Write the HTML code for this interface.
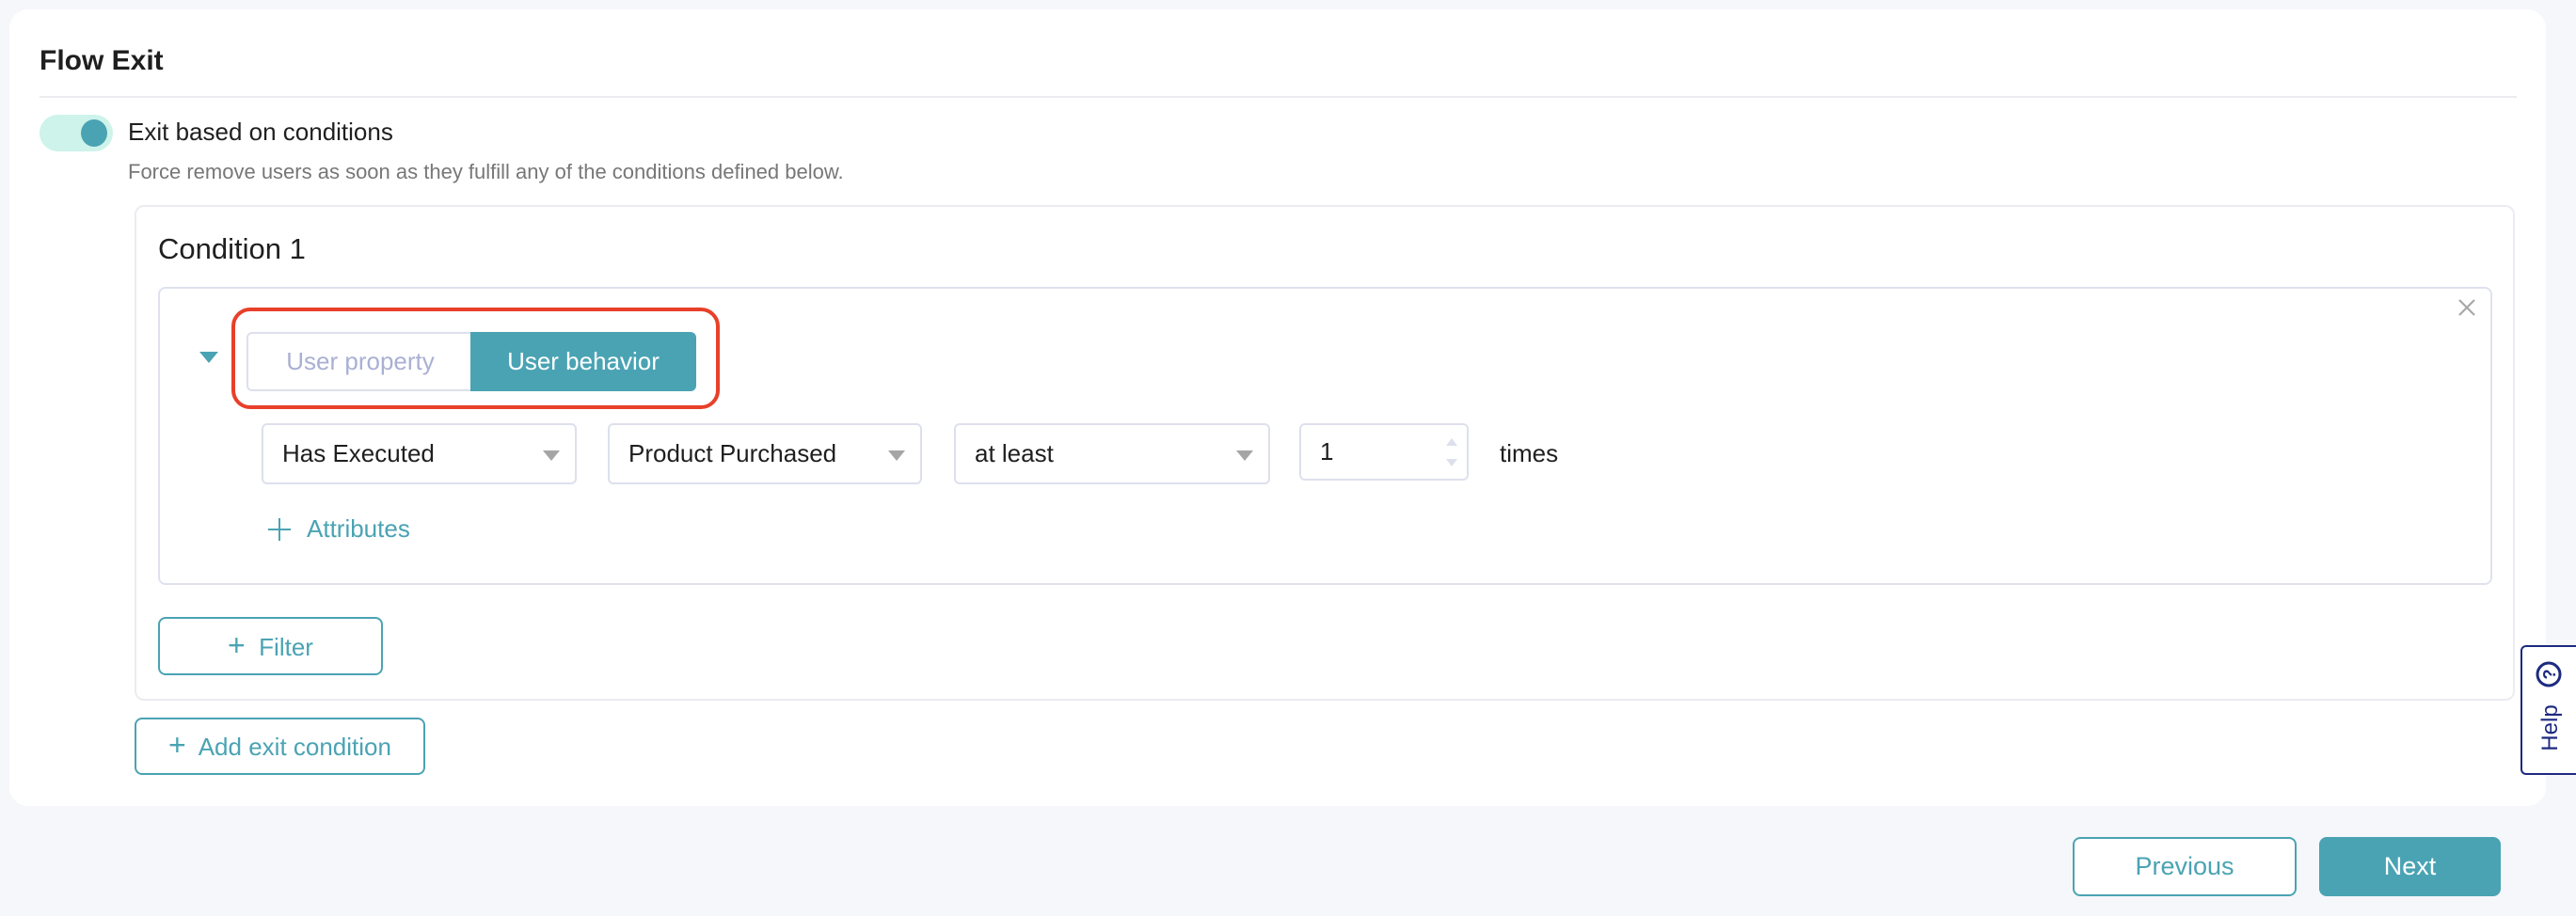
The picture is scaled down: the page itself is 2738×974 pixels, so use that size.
<!DOCTYPE html>
<html><head><style>
*{box-sizing:border-box;margin:0;padding:0}
body{width:2738px;height:974px;background:#f6f7fb;font-family:"Liberation Sans",sans-serif;position:relative;overflow:hidden;color:#1f1f1f}
.abs{position:absolute}
.card{left:10px;top:10px;width:2696px;height:847px;background:#fff;border-radius:20px}
.sel{top:450px;height:65px;border:2px solid #dde0ec;border-radius:6px;font-size:26px;line-height:61px;padding-left:20px;background:#fff}
.sel .ar{position:absolute;right:16px;top:27px;width:0;height:0;border-left:9px solid transparent;border-right:9px solid transparent;border-top:11px solid #a5a5a5}
.btn{border:2.5px solid #4aa3b3;border-radius:8px;color:#4aa3b3;font-size:26px;text-align:center;background:#fff}
</style></head><body>
<div class="abs card"></div>
<div class="abs" style="left:42px;top:48px;font-size:30px;font-weight:bold;color:#1f1f1f">Flow Exit</div>
<div class="abs" style="left:42px;top:102px;width:2633px;height:2px;background:#ececf1"></div>
<div class="abs" style="left:42px;top:122px;width:78px;height:39px;border-radius:20px;background:#cdf3ea"></div>
<div class="abs" style="left:86px;top:127px;width:28px;height:29px;border-radius:50%;background:#4aa3b3"></div>
<div class="abs" style="left:136px;top:125px;font-size:26px;color:#1f1f1f">Exit based on conditions</div>
<div class="abs" style="left:136px;top:170px;font-size:22px;color:#777">Force remove users as soon as they fulfill any of the conditions defined below.</div>
<div class="abs" style="left:143px;top:218px;width:2530px;height:527px;border:2px solid #ebecf1;border-radius:10px"></div>
<div class="abs" style="left:168px;top:247px;font-size:31px;color:#1f1f1f">Condition 1</div>
<div class="abs" style="left:168px;top:305px;width:2481px;height:317px;border:2px solid #dfe2ee;border-radius:8px"></div>
<svg class="abs" style="left:2612px;top:317px" width="20" height="20"><path d="M2 2L18 18M18 2L2 18" stroke="#a8a8a8" stroke-width="2.2"/></svg>
<div class="abs" style="left:212px;top:374px;width:0;height:0;border-left:10px solid transparent;border-right:10px solid transparent;border-top:12px solid #4aa3b3"></div>
<div class="abs" style="left:246px;top:327px;width:519px;height:108px;border:4px solid #e8402a;border-radius:20px"></div>
<div class="abs" style="left:262px;top:353px;width:240px;height:63px;border:2px solid #dde0ec;border-right:none;border-radius:6px 0 0 6px;color:#a9b0d3;font-size:26px;text-align:center;line-height:59px">User property</div>
<div class="abs" style="left:500px;top:353px;width:240px;height:63px;background:#4aa3b3;border-radius:0 6px 6px 0;color:#fff;font-size:26px;text-align:center;line-height:63px">User behavior</div>
<div class="abs sel" style="left:278px;width:335px">Has Executed<span class="ar"></span></div>
<div class="abs sel" style="left:646px;width:334px">Product Purchased<span class="ar"></span></div>
<div class="abs sel" style="left:1014px;width:336px">at least<span class="ar"></span></div>
<div class="abs sel" style="left:1381px;width:180px;height:61px;line-height:57px">1
<span class="abs" style="right:10px;top:14px;width:0;height:0;border-left:6px solid transparent;border-right:6px solid transparent;border-bottom:8px solid #dde0ec"></span>
<span class="abs" style="right:10px;top:36px;width:0;height:0;border-left:6px solid transparent;border-right:6px solid transparent;border-top:8px solid #dde0ec"></span></div>
<div class="abs" style="left:1594px;top:467px;font-size:26px">times</div>
<svg class="abs" style="left:284px;top:550px" width="26" height="26"><path d="M13 1V25M1 13H25" stroke="#4aa3b3" stroke-width="2"/></svg>
<div class="abs" style="left:326px;top:547px;font-size:26px;color:#4aa3b3">Attributes</div>
<div class="abs btn" style="left:168px;top:656px;width:239px;height:62px;line-height:56px"><span style="font-size:32px">+</span>&nbsp; Filter</div>
<div class="abs btn" style="left:143px;top:763px;width:309px;height:61px;line-height:55px"><span style="font-size:32px">+</span>&nbsp; Add exit condition</div>
<div class="abs" style="left:2679px;top:686px;width:62px;height:138px;border:2px solid #1c2a80;border-right:none;border-radius:6px 0 0 6px;background:#fff"></div>
<div class="abs" style="left:2676px;top:760px;width:70px;transform:rotate(-90deg);font-size:24px;color:#1c2a80;text-align:center">Help</div>
<svg class="abs" style="left:2694px;top:702px" width="30" height="30"><circle cx="15" cy="15" r="12" fill="none" stroke="#1c2a80" stroke-width="3"/><text x="15" y="22" transform="rotate(-90 15 15)" font-size="18" font-weight="bold" text-anchor="middle" fill="#1c2a80" font-family="Liberation Sans">?</text></svg>
<div class="abs btn" style="left:2203px;top:890px;width:238px;height:63px;line-height:58px;font-size:27px">Previous</div>
<div class="abs" style="left:2465px;top:890px;width:193px;height:63px;line-height:63px;font-size:27px;background:#4aa3b3;color:#fff;text-align:center;border-radius:8px">Next</div>
</body></html>
